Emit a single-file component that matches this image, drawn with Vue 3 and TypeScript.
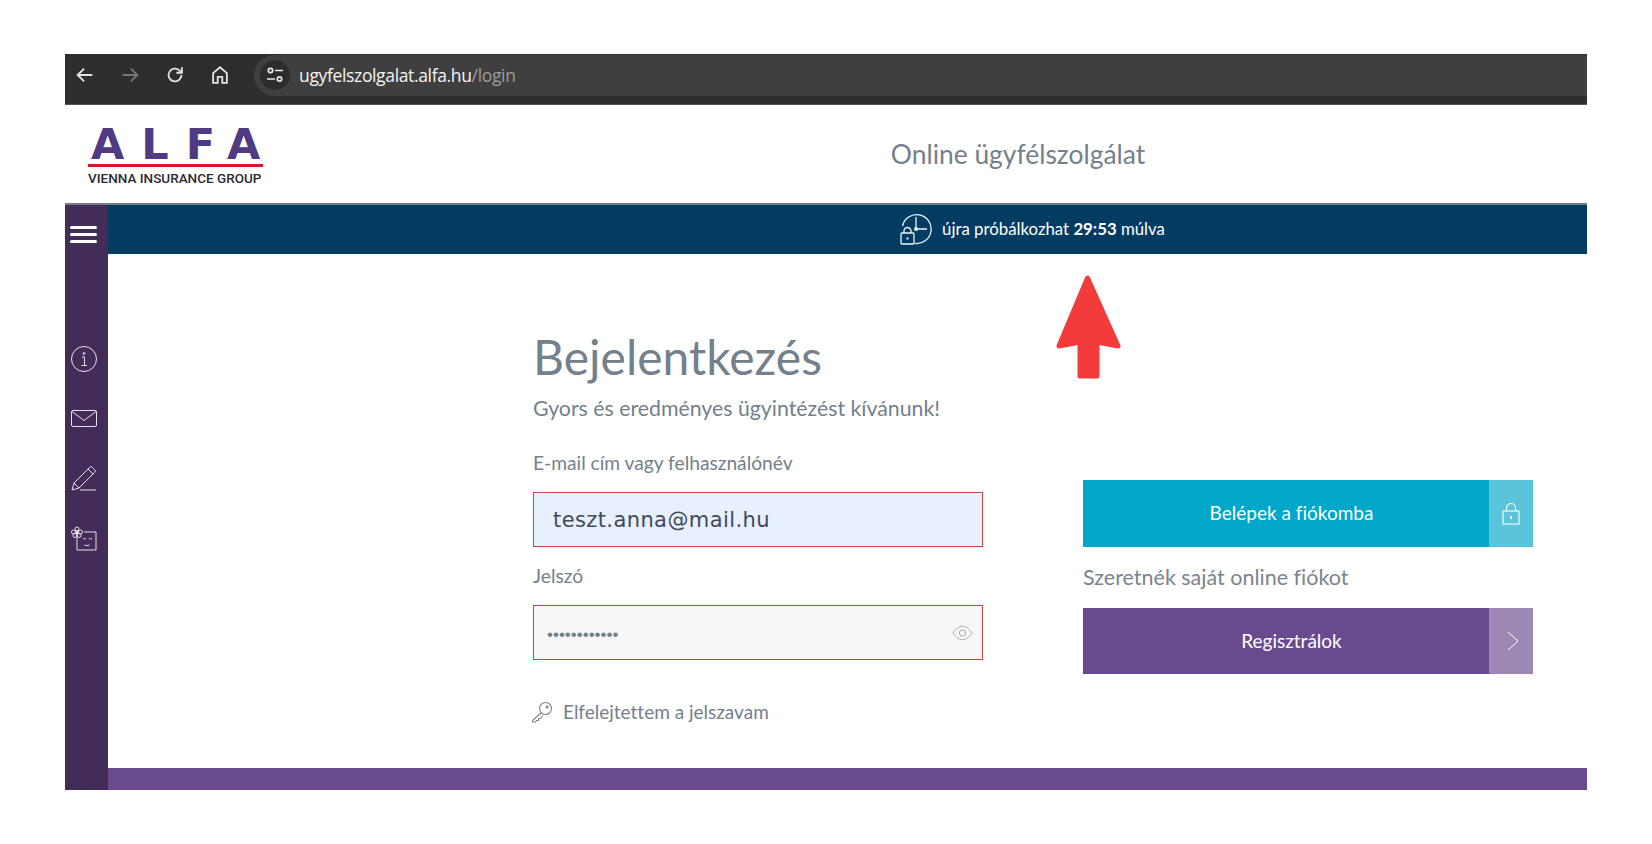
<script setup lang="ts">
const email = "teszt.anna@mail.hu";
const dots = "••••••••••••";
</script>

<template>
  <div class="shot">
    <div class="toolbar">
      <svg class="nav" viewBox="0 0 24 24" fill="none" stroke="#e3e3e3" stroke-width="2"><path d="M20 12H5M11 5l-7 7 7 7" /></svg>
      <svg class="nav" viewBox="0 0 24 24" fill="none" stroke="#777" stroke-width="2"><path d="M4 12h15M13 5l7 7-7 7" /></svg>
      <svg class="nav" viewBox="0 0 24 24" fill="none" stroke="#e3e3e3" stroke-width="2"><path d="M19 12a7 7 0 1 1-2.200-5.100L19 9" /><path d="M19.500 3.500v6H13.500" /></svg>
      <svg class="nav" viewBox="0 0 24 24" fill="none" stroke="#e3e3e3" stroke-width="2"><path d="M4.500 20.500v-10.500L12 3.500l7.500 6.500v10.500H14.500v-6.500h-5v6.500z" /></svg>
      <div class="address">
        <span class="tune">
          <svg viewBox="0 0 20 20" width="20" height="20" fill="none" stroke="#e8e8e8" stroke-width="1.700"><circle cx="5.500" cy="5.500" r="2.200" /><path d="M10 5.500h8M2 14h8" /><circle cx="14.500" cy="14" r="2.200" /></svg>
        </span>
        <span class="url">ugyfelszolgalat.alfa.hu<span class="url-path">/login</span></span>
      </div>
    </div>

    <header class="head">
      <div class="logo">
        <div class="logo-name">ALFA</div>
        <div class="logo-line"></div>
        <div class="logo-sub">VIENNA INSURANCE GROUP</div>
      </div>
      <div class="head-title">Online ügyfélszolgálat</div>
    </header>

    <div class="body">
      <aside class="side">
        <div class="burger"><i></i><i></i><i></i></div>
        <svg class="side-icon first" viewBox="0 0 26 26" fill="none" stroke="#e6e0ec" stroke-width="1"><circle cx="13" cy="13" r="12.500" /><circle cx="13" cy="7.500" r="1" /><path d="M11 11h2.500v8M10.500 19.500h5.500" /></svg>
        <svg class="side-icon" viewBox="0 0 26 26" fill="none" stroke="#e6e0ec" stroke-width="1"><rect x="0.500" y="4.500" width="25" height="16" rx="1.500" /><path d="M1 5.500l12 9 12-9" /></svg>
        <svg class="side-icon pencil" viewBox="0 0 26 26" fill="none" stroke="#e6e0ec" stroke-width="1"><path d="M1 25l2-7L18.500 2.500a2 2 0 0 1 3 0l2 2a2 2 0 0 1 0 3L8 23z" /><path d="M3 18l5 5M17 4l5 5" /><path d="M9 25h16" /></svg>
        <svg class="side-icon gift" viewBox="0 0 26 26" fill="none" stroke="#e6e0ec" stroke-width="1"><path d="M6 9v15h19V6H13" /><circle cx="6" cy="3" r="2" /><circle cx="2.500" cy="6" r="2" /><circle cx="9.500" cy="6" r="2" /><circle cx="4" cy="9.500" r="2" /><circle cx="8" cy="9.500" r="2" /><circle cx="6" cy="6.300" r="1.400" fill="#e6e0ec" /><path d="M12 13q1.500-1 3 0M18 13q1.500-1 3 0M13.500 19q2.500 1.500 5 0" /></svg>
      </aside>

      <div class="main">
        <div class="notice">
          <svg class="notice-icon" viewBox="0 0 32 32" fill="none" stroke="#eef3f7" stroke-width="1.300">
            <path d="M2.500 13A14.500 14.500 0 1 1 15 30.500" />
            <path d="M16 4v12h11" />
            <circle cx="16" cy="16" r="1.300" fill="#eef3f7" />
            <rect x="1" y="20" width="13" height="11" rx="1" fill="#033c63" />
            <path d="M4 20v-2a3.500 3.500 0 0 1 7 0v2" />
            <path d="M7.500 24.500v2" stroke-width="2" />
          </svg>
          <span>újra próbálkozhat <b>29:53</b> múlva</span>
        </div>

        <div class="content">
          <form class="login" @submit.prevent>
            <h1>Bejelentkezés</h1>
            <p class="lead">Gyors és eredményes ügyintézést kívánunk!</p>
            <label class="label first-label">E-mail cím vagy felhasználónév</label>
            <div class="field field-email">{{ email }}</div>
            <label class="label">Jelszó</label>
            <div class="field field-pass">
              <span class="dots">{{ dots }}</span>
              <svg class="eye" viewBox="0 0 22 16" fill="none" stroke="#a9a9a9" stroke-width="1"><path d="M1 8c3-4.500 6.500-7 10-7s7 2.500 10 7c-3 4.500-6.500 7-10 7S4 12.500 1 8z" /><circle cx="11" cy="8" r="3.300" /></svg>
            </div>
            <a class="forgot">
              <svg class="key" viewBox="0 0 22 22" fill="none" stroke="#7d8790" stroke-width="1.100"><circle cx="14.500" cy="7.500" r="6" /><circle cx="16" cy="6" r="1" fill="#7d8790" /><path d="M10.500 11.500L1.500 19.500v1.500h3l1-1.500h2v-2h2l2.500-3" /></svg>
              Elfelejtettem a jelszavam
            </a>
          </form>

          <div class="actions">
            <button class="btn btn-login" type="button">
              <span class="btn-text">Belépek a fiókomba</span>
              <span class="btn-side">
                <svg viewBox="0 0 18 22" width="18" height="22" fill="none" stroke="#fff" stroke-width="1.100"><rect x="1" y="8" width="16" height="13" /><path d="M4.500 8V5a4.500 4.500 0 0 1 9 0v3" /><path d="M9 13v3" stroke-width="2" /></svg>
              </span>
            </button>
            <p class="want">Szeretnék saját online fiókot</p>
            <button class="btn btn-reg" type="button">
              <span class="btn-text">Regisztrálok</span>
              <span class="btn-side">
                <svg class="chevron" viewBox="0 0 12 20" width="12" height="20" fill="none" stroke="#fff" stroke-width="1"><path d="M1 1l10 9-10 9" /></svg>
              </span>
            </button>
          </div>
        </div>

        <div class="foot"></div>
      </div>
    </div>

    <svg class="arrow" viewBox="0 0 68 110"><path d="M33.500 6L64 74 43 70V104H26V70L5 74z" fill="#f33b3b" stroke="#f33b3b" stroke-width="5" stroke-linejoin="round" /></svg>
  </div>
</template>

<style>
html,
body {
  margin: 0;
  background: #fff;
}
</style>

<style scoped>
.shot {
  position: relative;
  width: 1522px;
  height: 736px;
  margin: 54px 0 0 65px;
  font-family: Lato, "Noto Sans", sans-serif;
  font-variant-ligatures: none;
  color: #74808a;
  display: flex;
  flex-direction: column;
}

.toolbar {
  height: 51px;
  box-sizing: border-box;
  border-bottom: 1px solid #555;
  background: #2e2e2e;
  display: flex;
  align-items: center;
  padding: 0 0 8px 9px;
}

.nav {
  width: 22px;
  height: 22px;
  margin-right: 23px;
  flex: none;
}

.address {
  flex: 1;
  height: 41px;
  background: #3f3f3f;
  border-radius: 21px 0 0 21px;
  display: flex;
  align-items: center;
  padding-left: 6px;
}

.tune {
  width: 30px;
  height: 30px;
  border-radius: 50%;
  background: #2d2d2d;
  display: flex;
  align-items: center;
  justify-content: center;
}

.url {
  margin-left: 9px;
  font: 17.500px "Open Sans", sans-serif;
  letter-spacing: -0.350px;
  color: #f4f4f4;
}

.url-path {
  color: #9c9c9c;
}

.head {
  height: 100px;
  box-sizing: border-box;
  border-bottom: 2px solid #6f7c86;
  display: flex;
  align-items: center;
  background: #fff;
}

.logo {
  width: 384px;
  padding: 3px 0 0 23px;
  box-sizing: border-box;
}

.logo-name {
  width: 175px;
  padding-left: 3px;
  box-sizing: border-box;
  font: bold 43px/35px "DejaVu Sans", sans-serif;
  letter-spacing: 17px;
  color: #4f3a83;
  white-space: nowrap;
}

.logo-line {
  width: 175px;
  height: 3px;
  margin-top: 2px;
  background: #e3102b;
}

.logo-sub {
  width: 175px;
  margin-top: 4px;
  font: 500 13.500px/14px Roboto, sans-serif;
  color: #2b2b33;
  white-space: nowrap;
}

.head-title {
  flex: 1;
  text-align: center;
  font-size: 26.400px;
  color: #74808a;
}

.body {
  flex: 1;
  display: flex;
  min-height: 0;
}

.side {
  width: 43px;
  padding-right: 6px;
  box-sizing: border-box;
  background: #432c57;
  display: flex;
  flex-direction: column;
  align-items: center;
  flex: none;
}

.burger {
  margin-top: 21px;
  width: 27px;
  display: flex;
  flex-direction: column;
  gap: 4px;
}

.burger i {
  display: block;
  height: 3px;
  border-radius: 2px;
  background: #fff;
}

.side-icon {
  width: 26px;
  height: 26px;
  margin-top: 34px;
}

.side-icon.first {
  margin-top: 103px;
}

.side-icon.pencil {
  margin-top: 33px;
}

.side-icon.gift {
  margin-top: 35px;
}

.main {
  flex: 1;
  display: flex;
  flex-direction: column;
  min-width: 0;
}

.notice {
  height: 49px;
  box-sizing: border-box;
  background: #033c63;
  color: #fff;
  font-size: 16.800px;
  display: flex;
  align-items: center;
  justify-content: center;
  gap: 10px;
  padding: 0 0 2px 370px;
}

.notice-icon {
  width: 32px;
  height: 32px;
}

.notice b {
  font-weight: 700;
}

.content {
  flex: 1;
  display: flex;
  gap: 100px;
  padding-left: 425px;
  min-height: 0;
}

.login {
  width: 450px;
  display: flex;
  flex-direction: column;
}

h1 {
  margin: 75px 0 0;
  font-size: 48px;
  font-weight: 400;
  line-height: 56px;
  color: #74808a;
}

.lead {
  margin: 9px 0 0;
  font-size: 21.300px;
  line-height: 28px;
}

.label {
  margin-top: 18px;
  font-size: 19.200px;
  line-height: 22px;
  height: 22px;
}

.first-label {
  margin-top: 30px;
}

.field {
  height: 55px;
  margin-top: 18px;
  box-sizing: border-box;
  border: 1px solid #d43f3f;
  display: flex;
  align-items: center;
}

.field-email {
  background: #e8f0fe;
  padding-left: 19px;
  font: 21px "DejaVu Sans", sans-serif;
  letter-spacing: 0.400px;
  color: #3f4a5a;
}

.field-pass {
  background: #f7f7f7;
  padding: 0 9px 0 13px;
  justify-content: space-between;
}

.dots {
  padding-top: 3px;
  font: 17px/1 "Liberation Sans", sans-serif;
  color: #74808a;
}

.eye {
  width: 21px;
  height: 16px;
}

.forgot {
  margin-top: 40px;
  display: flex;
  align-items: center;
  gap: 10px;
  font-size: 19px;
  line-height: 24px;
  color: #74808a;
}

.key {
  width: 22px;
  height: 22px;
  margin-left: -2px;
}

.actions {
  width: 450px;
  padding-top: 226px;
}

.btn {
  width: 100%;
  border: 0;
  padding: 0;
  display: flex;
  color: #fff;
  font: 19px Lato, sans-serif;
  font-variant-ligatures: none;
}

.btn-text {
  flex: 1;
  display: flex;
  align-items: center;
  justify-content: center;
  padding: 0 0 2px 11px;
}

.btn-side {
  width: 44px;
  display: flex;
  align-items: center;
  justify-content: center;
}

.chevron {
  margin-left: 3px;
}

.btn-login {
  height: 67px;
  background: #00a7c9;
}

.btn-login .btn-side {
  background: #59c4da;
}

.btn-reg {
  height: 66px;
  background: #6a4a8e;
}

.btn-reg .btn-side {
  background: #9d87b3;
}

.want {
  margin: 0;
  height: 61px;
  font-size: 21.500px;
  line-height: 61px;
  color: #7a848c;
}

.foot {
  height: 22px;
  background: #6a4a8e;
  flex: none;
}

.arrow {
  position: absolute;
  left: 989px;
  top: 218px;
  width: 68px;
  height: 110px;
}
</style>
